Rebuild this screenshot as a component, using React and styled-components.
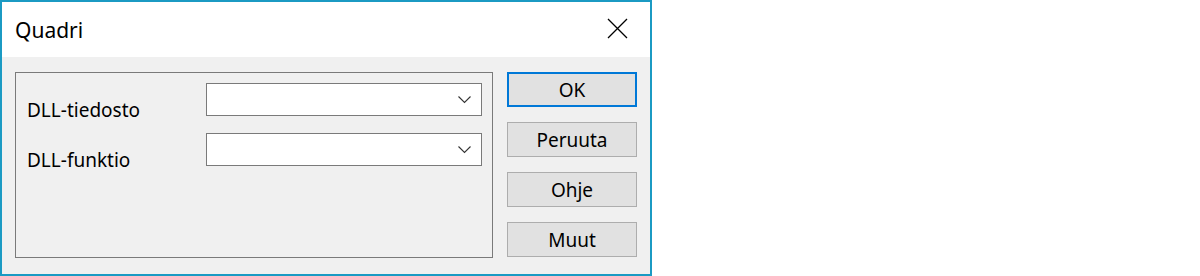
import styled, { createGlobalStyle } from 'styled-components';

const Global = createGlobalStyle`
    body {
        margin: 0;
        background: #ffffff;
        font-family: "Noto Sans", "Open Sans", sans-serif;
    }
`

const Janela = styled.div`
    width: 652px;
    height: 276px;
    box-sizing: border-box;
    border: 2px solid #1b9ac3;
    background: #f0f0f0;
    display: flex;
    flex-direction: column;
`

const BarraTitulo = styled.div`
    height: 55px;
    background: #ffffff;
    display: flex;
    align-items: center;
    justify-content: space-between;
    padding: 0 22px 0 13px;
    font-size: 21px;
    color: #000;
`

const Fechar = styled.button`
    border: none;
    background: none;
    padding: 0;
    width: 21px;
    height: 21px;
    display: flex;
    margin-top: -2px;
`

const Corpo = styled.div`
    display: flex;
    padding: 15px 13px 0 13px;
    gap: 14px;
`

const Grupo = styled.div`
    width: 478px;
    height: 186px;
    box-sizing: border-box;
    border: 1px solid #7a7a7a;
    padding: 10px 10px 0 11px;
    display: flex;
    flex-direction: column;
    gap: 17px;
`

const Linha = styled.div`
    display: flex;
    align-items: flex-start;
    height: 33px;
`

const Rotulo = styled.label`
    width: 179px;
    font-size: 19px;
    line-height: 24px;
    padding-top: 15px;
    color: #000;
`

const Combo = styled.div`
    width: 276px;
    height: 33px;
    box-sizing: border-box;
    border: 1px solid #7a7a7a;
    background: #fff;
    display: flex;
    align-items: center;
    justify-content: flex-end;
    padding-right: 10px;
`

const Botoes = styled.div`
    display: flex;
    flex-direction: column;
    gap: 15px;
`

const Botao = styled.button`
    width: 130px;
    height: 35px;
    box-sizing: border-box;
    background: #e1e1e1;
    border: ${props => props.$padrao ? '2px solid #0078d7' : '1px solid #adadad'};
    font-family: "Noto Sans", "Open Sans", sans-serif;
    font-size: 19px;
    color: #000;
    padding: 0;
`

function Seta() {
    return (
        <svg width="13" height="8" viewBox="0 0 13 8">
            <path d="M0.5 0.5 L6.5 6.5 L12.5 0.5" fill="none" stroke="#333" strokeWidth="1.1" />
        </svg>
    )
}

function Quadri() {
    return (
        <Janela>
            <BarraTitulo>
                <span>Quadri</span>
                <Fechar aria-label="Sulje">
                    <svg width="21" height="21" viewBox="0 0 21 21">
                        <path d="M1 1 L20 20 M20 1 L1 20" stroke="#000" strokeWidth="1.3" />
                    </svg>
                </Fechar>
            </BarraTitulo>
            <Corpo>
                <Grupo>
                    <Linha>
                        <Rotulo>DLL-tiedosto</Rotulo>
                        <Combo><Seta /></Combo>
                    </Linha>
                    <Linha>
                        <Rotulo>DLL-funktio</Rotulo>
                        <Combo><Seta /></Combo>
                    </Linha>
                </Grupo>
                <Botoes>
                    <Botao $padrao>OK</Botao>
                    <Botao>Peruuta</Botao>
                    <Botao>Ohje</Botao>
                    <Botao>Muut</Botao>
                </Botoes>
            </Corpo>
        </Janela>
    )
}

export default function App() {
    return (
        <>
            <Global />
            <Quadri />
        </>
    )
}
